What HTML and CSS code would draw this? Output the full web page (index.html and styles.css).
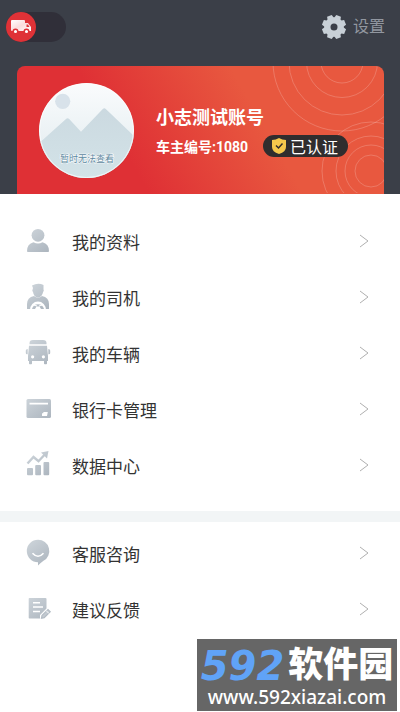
FILE: index.html
```html
<!DOCTYPE html>
<html lang="zh-CN">
<head>
<meta charset="utf-8">
<meta name="viewport" content="width=device-width, initial-scale=1">
<title>我的</title>
<link rel="stylesheet" href="styles.css">
</head>
<body>
<svg class="defs" width="0" height="0" aria-hidden="true">
  <defs>
    <linearGradient id="steel" gradientUnits="userSpaceOnUse" x1="4" y1="2" x2="22" y2="26">
      <stop offset="0" stop-color="#cdd4da"/><stop offset="1" stop-color="#adb6bf"/>
    </linearGradient>
    <linearGradient id="sky" x1="0" y1="0" x2="0" y2="1">
      <stop offset="0" stop-color="#fafcfd"/><stop offset="1" stop-color="#dfe9ed"/>
    </linearGradient>
    <linearGradient id="hill" x1="0" y1="0" x2="0" y2="1">
      <stop offset="0" stop-color="#cbd9e0"/><stop offset="1" stop-color="#d3e3e8"/>
    </linearGradient>
    <linearGradient id="truck" x1="0" y1="0" x2="1" y2="1">
      <stop offset="0" stop-color="#ffffff"/><stop offset=".5" stop-color="#fbdcdc"/><stop offset="1" stop-color="#ffffff"/>
    </linearGradient>
  </defs>
</svg>
<div class="screen">
  <header class="header">
    <div class="topbar">
      <label class="switch">
        <input class="switch-input" type="checkbox" aria-label="车主模式">
        <span class="knob">
          <svg width="20" height="16" viewBox="0 0 20 16" aria-hidden="true">
            <path fill="url(#truck)" d="M1 1h12a1 1 0 0 1 1 1v10H1a1 1 0 0 1-1-1V2a1 1 0 0 1 1-1zM14 4h3l3 4v4h-6z"/>
            <path fill="#df3237" d="M15.500 5.500h1.500l1.500 2.500h-3z"/>
            <g fill="#fff" stroke="#df3237" stroke-width="1.500"><circle cx="4.500" cy="12.500" r="2.300"/><circle cx="15.500" cy="12.500" r="2.300"/></g>
          </svg>
        </span>
      </label>
      <a class="settings" href="#settings">
        <svg width="26" height="26" viewBox="0 0 26 26" aria-hidden="true">
          <g fill="#c8d0d7">
            <path id="tooth" d="M9.500 5 10.500 1h5l1 4z" transform="rotate(22.5 13 13)"/>
            <use href="#tooth" transform="rotate(45 13 13)"/><use href="#tooth" transform="rotate(90 13 13)"/><use href="#tooth" transform="rotate(135 13 13)"/><use href="#tooth" transform="rotate(180 13 13)"/><use href="#tooth" transform="rotate(225 13 13)"/><use href="#tooth" transform="rotate(270 13 13)"/><use href="#tooth" transform="rotate(315 13 13)"/>
            <circle cx="13" cy="13" r="9.800"/>
          </g>
          <circle cx="13" cy="13" r="3.500" fill="#3b3f48"/>
        </svg>
        <span>设置</span>
      </a>
    </div>
    <section class="card">
      <svg class="rings" width="140" height="127" viewBox="227 0 140 127" fill="none" stroke="#fff" stroke-opacity=".2" aria-hidden="true">
        <circle cx="325" cy="-4" r="21"/><circle cx="325" cy="-4" r="35.500"/><circle cx="325" cy="-4" r="53"/><circle cx="325" cy="-4" r="69"/>
        <circle cx="354" cy="105" r="16"/><circle cx="354" cy="105" r="26"/><circle cx="354" cy="105" r="35"/><circle cx="354" cy="105" r="49"/>
      </svg>
      <svg class="avatar" width="95" height="95" viewBox="0 0 95 95" role="img" aria-label="头像">
        <rect width="95" height="95" fill="url(#sky)"/>
        <circle cx="23.700" cy="18.300" r="7.600" fill="#d8e2ea"/>
        <path fill="url(#hill)" d="M0 60.300 27 36q1.700-1.400 3.200 0L42 48.700 63.800 26q1.500-1.400 3 0L95 53v42H0z"/>
        <circle cx="47.500" cy="47.500" r="47" fill="none" stroke="#fff" stroke-opacity=".7"/>
        <text class="avatar-text" x="48" y="79" text-anchor="middle">暂时无法查看</text>
      </svg>
      <div class="profile">
        <h1 class="name">小志测试账号</h1>
        <div class="meta">
          <span>车主编号:1080</span>
          <span class="badge">
            <svg width="16" height="18" viewBox="0 0 16 18" aria-hidden="true">
              <path fill="#f5c84c" d="M8 1q3 2 7 2v7q0 5-7 7-7-2-7-7V3q4 0 7-2z"/>
              <path d="m5 8.500 2.500 2.500 4-4.500" fill="none" stroke="#302d2c" stroke-width="1.500"/>
            </svg>
            已认证
          </span>
        </div>
      </div>
    </section>
  </header>
  <main>
    <nav class="menu" aria-label="账户">
      <a class="item" href="#profile">
        <svg class="icon" viewBox="0 0 28 28" aria-hidden="true"><circle cx="14" cy="8.300" r="6.400"/><path d="M9.500 15.300q4.500 2.500 9 0Q25 17 25 24.200q0 .8-1 .8H4q-1 0-1-.8Q3 17 9.500 15.300z"/></svg>
        <span>我的资料</span><svg class="arrow" viewBox="0 0 10 14" aria-hidden="true"><path d="m1 1 8 6-8 6"/></svg>
      </a>
      <a class="item" href="#driver">
        <svg class="icon" viewBox="0 0 28 28" aria-hidden="true"><path d="M8 2.500q6-3 11.500-.500v4.500q.8 1-.4 2.500-1 5-5.100 5.500-4.200-.5-5-5.500-1.200-1.500-.4-2.500L9 5z"/><path d="M10 13q4 3 8 0 7 1.500 7 8v5H3v-5q0-6.500 7-8z"/><path fill="#fff" d="M6 27a8 8.500 0 0 1 16 0z"/><path d="M8 26a6.200 6.500 0 0 1 12 0h-3l-1.500-2.500h-3L11 26z"/><path d="m9.500 22 3.500 1m5.500-1L15 23" fill="none" stroke="#fff"/></svg>
        <span>我的司机</span><svg class="arrow" viewBox="0 0 10 14" aria-hidden="true"><path d="m1 1 8 6-8 6"/></svg>
      </a>
      <a class="item" href="#vehicle">
        <svg class="icon" viewBox="0 0 28 28" aria-hidden="true"><path d="M5.500 5.300V4Q5.500 1 9 1h10q3.500 0 3.500 3v1.300zM5 6.800h18L24 17v5h-1v2.500q0 .8-.8.800h-1.400q-.8 0-.8-.8V22H8v2.500q0 .8-.8.800H5.800q-.8 0-.8-.8V22H4v-5z"/><path d="M3.700 10v5.200H3q-1.200 0-1.200-1.200v-2.500q0-1.500 1.900-1.500zM24.300 10v5.200h.7q1.200 0 1.200-1.200v-2.500q0-1.500-1.900-1.500z"/><g fill="#fff"><circle cx="8.600" cy="17.800" r="1.600"/><circle cx="19.400" cy="17.800" r="1.600"/></g></svg>
        <span>我的车辆</span><svg class="arrow" viewBox="0 0 10 14" aria-hidden="true"><path d="m1 1 8 6-8 6"/></svg>
      </a>
      <a class="item" href="#cards">
        <svg class="icon" viewBox="0 0 28 28" aria-hidden="true"><rect x="2.500" y="4" width="24.500" height="19" rx="1.500"/><path fill="#fff" d="M5.500 7.800h18.500v1.800H5.500zM19.500 17h4.300l-.8 4h-5v-2.700h1.200z"/></svg>
        <span>银行卡管理</span><svg class="arrow" viewBox="0 0 10 14" aria-hidden="true"><path d="m1 1 8 6-8 6"/></svg>
      </a>
      <a class="item" href="#data">
        <svg class="icon" viewBox="0 0 28 28" aria-hidden="true"><rect x="3" y="17" width="6" height="7.300" rx="1"/><rect x="11.200" y="14" width="5.800" height="10.300" rx="1"/><rect x="19.500" y="11" width="5.700" height="13.300" rx="1"/><path d="M3.500 12.500 9.500 6l5 4.200 7-7.500" fill="none" stroke="url(#steel)" stroke-width="2.400"/><path d="M17 1.500 24.500 0l-1.500 7.500z"/></svg>
        <span>数据中心</span><svg class="arrow" viewBox="0 0 10 14" aria-hidden="true"><path d="m1 1 8 6-8 6"/></svg>
      </a>
    </nav>
    <nav class="menu menu-support" aria-label="支持">
      <a class="item" href="#service">
        <svg class="icon" viewBox="0 0 28 28" aria-hidden="true"><path d="M14 .8a11.200 11.200 0 0 1 5.500 21Q16.500 24 14 26.500V23.200A11.200 11.200 0 0 1 14 .8z"/><path d="M8.500 14.200q5.500 6 11 0" fill="none" stroke="#fff" stroke-width="1.600"/></svg>
        <span>客服咨询</span><svg class="arrow" viewBox="0 0 10 14" aria-hidden="true"><path d="m1 1 8 6-8 6"/></svg>
      </a>
      <a class="item" href="#feedback">
        <svg class="icon" viewBox="0 0 28 28" aria-hidden="true"><path d="M5.500 3h16q1 0 1 1v9.500L16 20v3.500H5.500q-.8 0-.8-.8V3.800q0-.8.8-.8z"/><path d="M9 7.800h7M9 12h10M9 16.500h7" fill="none" stroke="#fff" stroke-width="1.500"/><path d="m18 20.500 6-6 2.200 2.200-6 6-2.700.5z" fill="#c3cad1" stroke="url(#steel)" stroke-width="1.200"/><path d="m22 15.500 3 3" fill="none" stroke="#fff"/></svg>
        <span>建议反馈</span><svg class="arrow" viewBox="0 0 10 14" aria-hidden="true"><path d="m1 1 8 6-8 6"/></svg>
      </a>
    </nav>
  </main>
  <aside class="watermark">
    <div class="brand"><span class="brand-num">592</span><span class="brand-name">软件园</span></div>
    <div class="site">www.592xiazai.com</div>
  </aside>
</div>
</body>
</html>
```
FILE: styles.css
```css
* {
  box-sizing: border-box;
}

body {
  margin: 0;
  background: #fff;
  color: #333;
  font-family: Roboto, "Noto Sans CJK SC", sans-serif;
}

a {
  color: inherit;
  text-decoration: none;
}

.defs {
  position: absolute;
}

.screen {
  position: relative;
  min-height: 100vh;
}

.header {
  padding: 12px 16px 0 17px;
  background: #3b3f48;
}

.topbar {
  display: flex;
  align-items: center;
  justify-content: space-between;
  height: 30px;
  margin: 0 -1px 24px -11px;
}

.switch {
  display: flex;
  width: 60px;
  height: 30px;
  border-radius: 15px;
  background: #302f39;
  cursor: pointer;
}

.switch-input {
  position: absolute;
  width: 60px;
  height: 30px;
  margin: 0;
  opacity: 0;
}

.knob {
  display: flex;
  align-items: center;
  justify-content: center;
  width: 30px;
  height: 30px;
  border-radius: 50%;
  background: #df3237;
}

.settings {
  display: flex;
  align-items: center;
  gap: 6px;
  color: #9297a0;
  font-size: 16px;
  line-height: 24px;
}

.card {
  position: relative;
  display: flex;
  gap: 22px;
  padding: 17px 22px 16px;
  border-radius: 8px 8px 0 0;
  background: linear-gradient(60deg, #df3035 30%, #e8583f 65%);
  color: #fff;
  overflow: hidden;
}

.rings {
  position: absolute;
  top: 0;
  right: 0;
}

.avatar {
  flex: none;
  border-radius: 50%;
}

.avatar-text {
  fill: #5c87a0;
  stroke: #fff;
  stroke-width: 1px;
  paint-order: stroke;
  font-size: 9px;
}

.profile {
  position: relative;
  padding-top: 22px;
}

.name {
  margin: 0 0 4px;
  font-size: 18px;
  font-weight: 700;
  line-height: 26px;
}

.meta {
  display: flex;
  align-items: center;
  gap: 15px;
  font-size: 14px;
  font-weight: 700;
  white-space: nowrap;
}

.badge {
  display: flex;
  align-items: center;
  gap: 3px;
  height: 22px;
  padding: 0 10px 0 8px;
  border-radius: 11px;
  background: #302d2e;
  font-size: 16px;
  font-weight: 400;
}

.menu {
  padding: 19px 0 18px;
}

.menu-support {
  padding: 3px 0;
  border-top: 11px solid #f2f5f6;
}

.item {
  display: flex;
  align-items: center;
  gap: 20px;
  height: 56px;
  padding: 0 31px 0 24px;
  font-size: 17px;
}

.icon {
  width: 28px;
  height: 28px;
  fill: url(#steel);
  overflow: visible;
}

.arrow {
  width: 10px;
  height: 14px;
  margin-left: auto;
  fill: none;
  stroke: #b0b0b0;
}

.watermark {
  position: absolute;
  right: 3px;
  bottom: 1px;
  width: 200px;
  padding: 8px 0 2px;
  background: #666;
  color: #fff;
  text-align: center;
}

.brand {
  display: flex;
  align-items: center;
  justify-content: center;
  gap: 4px;
  height: 38px;
  font-weight: 700;
  line-height: 38px;
}

.brand-num {
  color: #60a3f7;
  font-family: "DejaVu Sans", sans-serif;
  font-size: 40px;
  font-style: italic;
}

.brand-name {
  font-size: 35px;
  font-weight: 900;
}

.site {
  font-family: "Noto Sans", sans-serif;
  font-size: 19px;
  font-weight: 500;
  line-height: 24px;
}
```
